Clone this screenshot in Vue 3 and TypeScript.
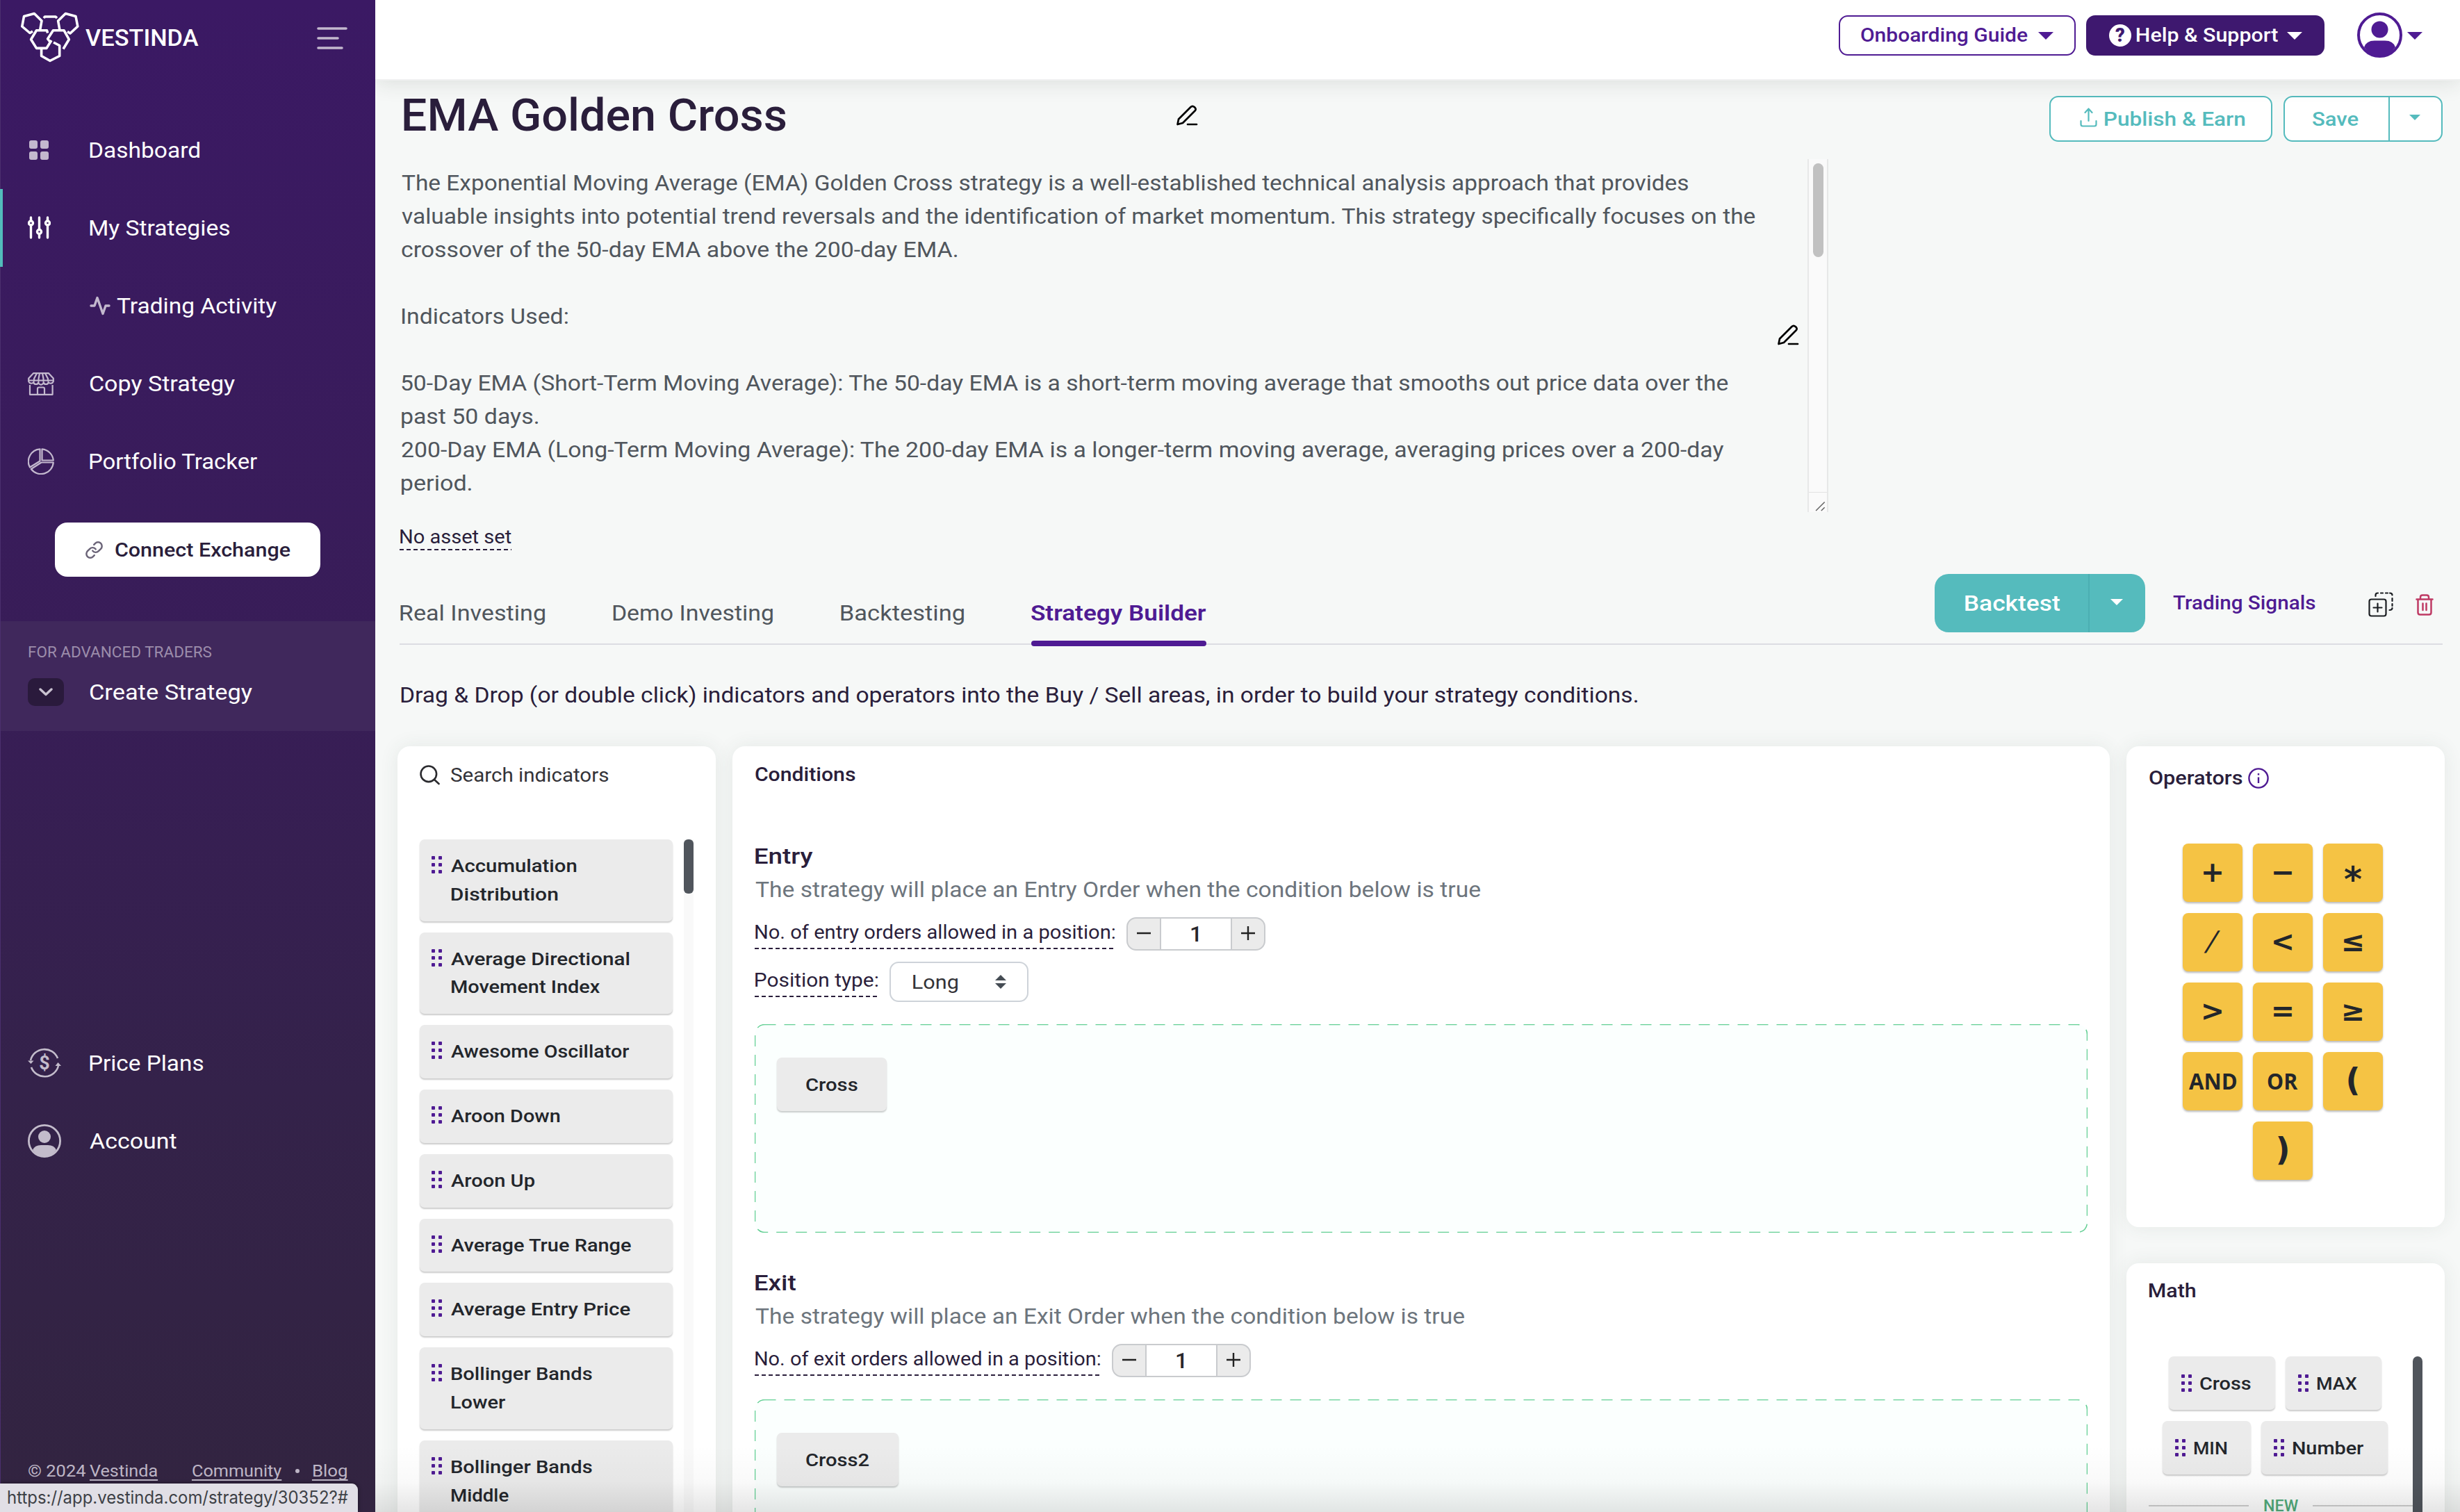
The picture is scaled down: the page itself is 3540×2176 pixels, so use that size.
<script setup lang="ts">
import type { Directive } from 'vue'

// Stretches a single line of text so that its ink spans exactly the given width.
const vFit: Directive<HTMLElement, number> = {
  mounted(el, binding) {
    const text = (el.textContent ?? '').trim()
    const css = getComputedStyle(el)
    const ctx = document.createElement('canvas').getContext('2d')
    if (!ctx || text.length < 2) return
    ctx.font = `${css.fontWeight} ${css.fontSize} ${css.fontFamily}`
    const m = ctx.measureText(text)
    const ink = m.actualBoundingBoxLeft + m.actualBoundingBoxRight
    const w = binding.value
    const scale = w / ink
    el.style.width = `${ink}px`
    el.style.marginRight = `${w - ink}px`
    el.style.textIndent = `${m.actualBoundingBoxLeft}px`
    el.style.transform = `scaleX(${scale})`
  },
}

interface Line { t: string; w: number }

const description: Line[] = [
  { t: 'The Exponential Moving Average (EMA) Golden Cross strategy is a well-established technical analysis approach that provides', w: 1851 },
  { t: 'valuable insights into potential trend reversals and the identification of market momentum. This strategy specifically focuses on the', w: 1948 },
  { t: 'crossover of the 50-day EMA above the 200-day EMA.', w: 799 },
  { t: '', w: 0 },
  { t: 'Indicators Used:', w: 239 },
  { t: '', w: 0 },
  { t: '50-Day EMA (Short-Term Moving Average): The 50-day EMA is a short-term moving average that smooths out price data over the', w: 1909 },
  { t: 'past 50 days.', w: 196 },
  { t: '200-Day EMA (Long-Term Moving Average): The 200-day EMA is a longer-term moving average, averaging prices over a 200-day', w: 1903 },
  { t: 'period.', w: 100 },
]

const indicators: Line[][] = [
  [{ t: 'Accumulation', w: 181 }, { t: 'Distribution', w: 154 }],
  [{ t: 'Average Directional', w: 256 }, { t: 'Movement Index', w: 214 }],
  [{ t: 'Awesome Oscillator', w: 257 }],
  [{ t: 'Aroon Down', w: 157 }],
  [{ t: 'Aroon Up', w: 120 }],
  [{ t: 'Average True Range', w: 260 }],
  [{ t: 'Average Entry Price', w: 258 }],
  [{ t: 'Bollinger Bands', w: 203 }, { t: 'Lower', w: 79 }],
  [{ t: 'Bollinger Bands', w: 203 }, { t: 'Middle', w: 83 }],
]

interface Operator { t: string; kind?: string; w?: number }

const operators: Operator[] = [
  { t: '+' }, { t: '−' }, { t: '*', kind: 'star' },
  { t: '/', kind: 'slash' }, { t: '<' }, { t: '≤' },
  { t: '>' }, { t: '=' }, { t: '≥' },
  { t: 'AND', kind: 'word', w: 68 }, { t: 'OR', kind: 'word', w: 44 }, { t: '(', kind: 'paren' },
  { t: ')', kind: 'paren' },
]

const mathRows: Line[][] = [
  [{ t: 'Cross', w: 73 }, { t: 'MAX', w: 58 }],
  [{ t: 'MIN', w: 47 }, { t: 'Number', w: 103 }],
]
</script>

<template>
  <div class="app">
    <aside class="side">
      <div class="brand">
        <svg class="logo" width="84" height="73" viewBox="30 17 84 73" fill="none" stroke="#fff" stroke-width="3.6" stroke-linejoin="round">
          <path d="M57.5 44L60 30 49.3 19.5 34.5 23.5 31.8 38 43 47.5 47 45" />
          <path d="M86 43.5L83.6 30 94.3 19.5 109 23.5 111.8 38 101 48 97 45.5" />
          <path d="M63 26L64.5 24H80L82 26" />
          <path d="M68.6 47.5L67.5 43.7H52.5L44.6 56.7 52.5 69.4H67L74 58" />
          <path d="M73 61.5L68.6 56 76.5 43.7H92L99.3 56.7 91 70.5" />
          <path d="M59.6 69V80.5L72 87.5 85.7 80.5V65.5L77 61" />
        </svg>
        <span v-fit="163" class="brand-name">VESTINDA</span>
        <svg class="burger" width="44" height="32" viewBox="0 0 44 32" fill="none" stroke="#c3b8ce" stroke-width="3.6" stroke-linecap="round">
          <path d="M2 2H42M2 16H30M2 30H36" />
        </svg>
      </div>

      <nav class="nav">
        <a class="item">
          <svg class="ico dashboard" width="28" height="28" viewBox="0 0 28 28" fill="#c3b8ce">
            <rect width="12" height="12" rx="3" /><rect x="16" width="12" height="12" rx="3" />
            <rect y="16" width="12" height="12" rx="3" /><rect x="16" y="16" width="12" height="12" rx="3" />
          </svg>
          <span v-fit="158">Dashboard</span>
        </a>
        <a class="item active">
          <svg class="ico" width="33" height="34" viewBox="0 0 33 34" fill="none" stroke="#fff" stroke-width="3.4" stroke-linecap="round">
            <path d="M4.500 2V6M4.500 14V31M16.500 2V18M16.500 26V31M28.500 2V6M28.500 14V31" />
            <circle cx="4.500" cy="10" r="3" /><circle cx="16.500" cy="22.500" r="3" /><circle cx="28.500" cy="10" r="3" />
          </svg>
          <span v-fit="201">My Strategies</span>
        </a>
        <a class="item sub">
          <svg class="pulse" width="30" height="28" viewBox="0 0 30 28" fill="none" stroke="#c3b8ce" stroke-width="3.4" stroke-linecap="round" stroke-linejoin="round">
            <path d="M2 14H7L11 2.500 19 25.500 23 14H28" />
          </svg>
          <span v-fit="230">Trading Activity</span>
        </a>
        <a class="item">
          <svg class="ico" width="38" height="33" viewBox="0 0 38 33" fill="none" stroke="#c3b8ce" stroke-width="2.2" stroke-linejoin="round">
            <path d="M8 1.200H30L36.800 8.500V11.500H1.200V8.500Z M3 18V31.800H35.600V18M14 31.800V23.500Q14 21.500 16 21.500H22Q24 21.500 24 23.500V31.800" />
            <path d="M13 1.200L9 9V13M17 1.200L15.500 9V13M21 1.200L22.500 9V13M25 1.200L29 9V13M1.200 11.500V13A4 4 0 0 0 8.300 14 3.600 3.600 0 0 0 15.400 14 3.600 3.600 0 0 0 22.600 14 3.600 3.600 0 0 0 29.700 14 4 4 0 0 0 36.800 13V11.500" />
          </svg>
          <span v-fit="209">Copy Strategy</span>
        </a>
        <a class="item">
          <svg class="ico" width="38" height="38" viewBox="0 0 38 38" fill="none" stroke="#c3b8ce" stroke-width="2.200" stroke-linejoin="round">
            <path d="M17.500 1.300V18.500L3 27.500A17.800 17.800 0 0 1 17.500 1.300ZM20.500 1.300A17.800 17.800 0 0 1 36.800 17.500H20.500ZM36.800 20.500A17.800 17.800 0 0 1 4.800 30L19.500 20.500Z" />
          </svg>
          <span v-fit="242">Portfolio Tracker</span>
        </a>
      </nav>

      <button class="connect">
        <svg width="27" height="27" viewBox="0 0 24 24" fill="none" stroke="#6b6478" stroke-width="2.200" stroke-linecap="round" stroke-linejoin="round">
          <path d="M10 13a5 5 0 0 0 7.540.54l3-3a5 5 0 0 0-7.070-7.070l-1.720 1.710" /><path d="M14 11a5 5 0 0 0-7.540-.54l-3 3a5 5 0 0 0 7.070 7.070l1.710-1.710" />
        </svg>
        <span v-fit="252">Connect Exchange</span>
      </button>

      <div class="advanced">
        <div class="adv-label"><span v-fit="264">FOR ADVANCED TRADERS</span></div>
        <div class="adv-row">
          <i class="toggle">
            <svg width="20" height="12" viewBox="0 0 20 12" fill="none" stroke="#c9c2d0" stroke-width="3.400" stroke-linecap="round" stroke-linejoin="round"><path d="M2 2L10 9.500 18 2" /></svg>
          </i>
          <span v-fit="234">Create Strategy</span>
        </div>
      </div>

      <div class="lower">
        <a class="item">
          <svg class="ico" width="48" height="44" viewBox="0 0 48 44" fill="none" stroke="#c3bccb" stroke-width="2.600">
            <path d="M4 18A20.500 20.500 0 0 1 43 15M44 26A20.500 20.500 0 0 1 5 28" />
            <path d="M0 18.500L8.500 18.500 4.500 23ZM48 26H39.500L43.500 21Z" fill="#c3bccb" stroke="none" />
            <text x="24" y="31" font-size="27" font-weight="700" text-anchor="middle" fill="#c3bccb" stroke="none">$</text>
          </svg>
          <span v-fit="163">Price Plans</span>
        </a>
        <a class="item">
          <svg class="ico" width="48" height="48" viewBox="0 0 48 48" fill="#c3bccb">
            <circle cx="24" cy="24" r="22.600" fill="none" stroke="#c3bccb" stroke-width="2.800" /><circle cx="24" cy="18" r="9" />
            <path d="M7 37Q10 30 19 30H29Q38 30 41 37Q34 47 24 47T7 37Z" />
          </svg>
          <span v-fit="125">Account</span>
        </a>
      </div>

      <div class="foot">
        <span v-fit="82">© 2024</span><i class="g1"></i><u v-fit="97">Vestinda</u><i class="g2"></i>
        <u v-fit="129">Community</u><i class="dot"></i><u v-fit="49">Blog</u>
      </div>
    </aside>

    <section class="main">
      <header class="top">
        <button class="tbtn outline"><span v-fit="240">Onboarding Guide</span><i class="caret"></i></button>
        <button class="tbtn solid"><i class="q">?</i><span v-fit="203">Help &amp; Support</span><i class="caret"></i></button>
        <svg class="avatar" width="65" height="65" viewBox="0 0 65 65" fill="#4f1b93">
          <circle cx="32.500" cy="32.500" r="30.500" fill="none" stroke="#4f1b93" stroke-width="4" /><circle cx="32.500" cy="24.500" r="12" />
          <path d="M10 50Q13 40.500 25 40.500H40Q52 40.500 55 50Q46 63 32.500 63T10 50Z" />
        </svg>
        <i class="caret purple"></i>
      </header>

      <div class="content">
        <div class="head">
          <div class="info">
            <div class="title-row">
              <h1 v-fit="550">EMA Golden Cross</h1>
              <i class="title-gap"></i>
              <svg width="32" height="32" viewBox="0 0 32 32" fill="none" stroke="#000" stroke-width="2.700" stroke-linejoin="round" stroke-linecap="round"><path d="M2.500 29L4 21.500 21.500 4Q24 1.500 27 4.300T27.500 9.500L10 27ZM17 29H30" /></svg>
            </div>
            <div class="desc">
              <div class="desc-text">
                <div v-for="(l, i) in description" :key="i" class="dline"><span v-if="l.t" v-fit="l.w">{{ l.t }}</span></div>
              </div>
              <svg class="pen2" width="32" height="32" viewBox="0 0 32 32" fill="none" stroke="#000" stroke-width="2.700" stroke-linejoin="round" stroke-linecap="round"><path d="M2.500 29L4 21.500 21.500 4Q24 1.500 27 4.300T27.500 9.500L10 27ZM17 29H30" /></svg>
              <div class="dscroll">
                <i class="dthumb"></i>
                <svg class="grab" width="26" height="29" viewBox="0 0 26 29" stroke="#666" stroke-width="1.600"><path d="M10 27L23 14M18 27L23 22" /></svg>
              </div>
            </div>
          </div>
          <div class="actions">
            <button class="abtn publish">
              <svg width="25" height="28" viewBox="0 0 25 28" fill="none" stroke="#55bbbd" stroke-width="2.200" stroke-linecap="round" stroke-linejoin="round"><path d="M12.500 19V2M7.500 7L12.500 1.500 17.500 7M1.500 19V24Q1.500 26.500 4 26.500H21Q23.500 26.500 23.500 24V19" /></svg>
              <span v-fit="201">Publish &amp; Earn</span>
            </button>
            <div class="abtn save"><b><span v-fit="66">Save</span></b><b class="drop"><i class="caret teal"></i></b></div>
          </div>
        </div>

        <div class="asset"><span v-fit="160">No asset set</span></div>

        <div class="tabs">
          <a><span v-fit="208">Real Investing</span></a>
          <a><span v-fit="230">Demo Investing</span></a>
          <a><span v-fit="177">Backtesting</span></a>
          <a class="on"><span v-fit="252">Strategy Builder</span></a>
          <div class="tools">
            <div class="backtest"><b><span v-fit="136">Backtest</span></b><b class="bdrop"><i class="caret white"></i></b></div>
            <div class="signals"><span v-fit="205">Trading Signals</span></div>
            <svg class="dup" width="36" height="36" viewBox="0 0 36 36" fill="none" stroke="#1b1e22" stroke-width="2.200" stroke-linecap="round">
              <rect x="1.500" y="10.500" width="24" height="24" rx="3" /><path d="M13.500 16.500V28.500M7.500 22.500H19.500" />
              <path d="M10.500 6V4.500Q10.500 1.500 13.500 1.500H14M18 1.500H21M25 1.500H28M31 1.500Q34.500 1.500 34.500 4.500M34.500 9V13M34.500 17V20M34.500 23Q34.500 26 30.500 26" />
            </svg>
            <svg class="trash" width="26" height="31" viewBox="0 0 26 31" fill="none" stroke="#bf3a64" stroke-width="2.500" stroke-linecap="round" stroke-linejoin="round">
              <path d="M1.500 7.500H24.500M7 7V4.500Q7 1.500 10 1.500H16Q19 1.500 19 4.500V7M3.500 8V26.500Q3.500 29.500 6.500 29.500H19.500Q22.500 29.500 22.500 26.500V8M10.500 13.500V23M15.500 13.500V23" />
            </svg>
          </div>
        </div>

        <div class="hint"><span v-fit="1779">Drag &amp; Drop (or double click) indicators and operators into the Buy / Sell areas, in order to build your strategy conditions.</span></div>

        <div class="cols">
          <div class="card left">
            <div class="search">
              <svg width="29" height="29" viewBox="0 0 29 29" fill="none" stroke="#2b2b2f" stroke-width="2.600" stroke-linecap="round"><circle cx="12.800" cy="12.800" r="11.300" /><path d="M21 21L27.500 27" /></svg>
              <span v-fit="227">Search indicators</span>
            </div>
            <div class="list-wrap">
              <div class="list">
                <div v-for="(it, i) in indicators" :key="i" class="chip ind">
                  <i class="grip"><em v-for="n in 6" :key="n"></em></i>
                  <div class="lines"><div v-for="l in it" :key="l.t"><span v-fit="l.w">{{ l.t }}</span></div></div>
                </div>
              </div>
              <div class="track"><i></i></div>
            </div>
          </div>

          <div class="card mid">
            <div class="h28"><span v-fit="144">Conditions</span></div>

            <div class="sec entry">
              <div class="h32"><span v-fit="83">Entry</span></div>
              <div class="muted"><span v-fit="1043">The strategy will place an Entry Order when the condition below is true</span></div>
              <div class="row">
                <div class="dashed"><span v-fit="517">No. of entry orders allowed in a position:</span></div>
                <div class="stepper">
                  <b><svg width="20" height="20" viewBox="0 0 20 20" stroke="#222" stroke-width="2.400"><path d="M0 10H20" /></svg></b><strong>1</strong>
                  <b><svg width="20" height="20" viewBox="0 0 20 20" stroke="#222" stroke-width="2.400"><path d="M0 10H20M10 0V20" /></svg></b>
                </div>
              </div>
              <div class="row pos">
                <div class="dashed"><span v-fit="176">Position type:</span></div>
                <div class="select"><span v-fit="64">Long</span>
                  <svg width="16" height="20" viewBox="0 0 16 20" fill="#454c54"><path d="M8 0L16 8H0ZM8 20L0 12H16Z" /></svg>
                </div>
              </div>
              <div class="zone">
                <svg class="dash" width="1918" height="300"><rect x="0.500" y="0.500" width="1917" height="299" rx="14" fill="#fbfffe" stroke="#62cf93" stroke-width="1.500" stroke-dasharray="16 12" /></svg>
                <div class="chip cond"><span v-fit="74">Cross</span></div>
              </div>
            </div>

            <div class="sec exit">
              <div class="h32"><span v-fit="58">Exit</span></div>
              <div class="muted"><span v-fit="1020">The strategy will place an Exit Order when the condition below is true</span></div>
              <div class="row">
                <div class="dashed"><span v-fit="496">No. of exit orders allowed in a position:</span></div>
                <div class="stepper">
                  <b><svg width="20" height="20" viewBox="0 0 20 20" stroke="#222" stroke-width="2.400"><path d="M0 10H20" /></svg></b><strong>1</strong>
                  <b><svg width="20" height="20" viewBox="0 0 20 20" stroke="#222" stroke-width="2.400"><path d="M0 10H20M10 0V20" /></svg></b>
                </div>
              </div>
              <div class="zone">
                <svg class="dash" width="1918" height="300"><rect x="0.500" y="0.500" width="1917" height="299" rx="14" fill="#fbfffe" stroke="#62cf93" stroke-width="1.500" stroke-dasharray="16 12" /></svg>
                <div class="chip cond"><span v-fit="91">Cross2</span></div>
              </div>
            </div>
          </div>

          <div class="right">
            <div class="card ops">
              <div class="h28 op-title"><span v-fit="134">Operators</span>
                <i class="info-gap"></i>
                <svg width="30" height="30" viewBox="0 0 30 30" fill="none" stroke="#4f1b93" stroke-width="2.400"><circle cx="15" cy="15" r="13.600" /><path d="M15 13.500V22M15 8V10.500" /></svg>
              </div>
              <div class="grid">
                <div v-for="o in operators" :key="o.t" class="op" :class="o.kind">
                  <span v-if="o.w" v-fit="o.w">{{ o.t }}</span><span v-else>{{ o.t }}</span>
                </div>
              </div>
            </div>
            <div class="card math">
              <div class="h28"><span v-fit="66">Math</span></div>
              <div class="math-body">
                <div class="math-list">
                  <div v-for="(r, i) in mathRows" :key="i" class="mrow">
                    <div v-for="c in r" :key="c.t" class="chip mchip">
                      <i class="grip"><em v-for="n in 6" :key="n"></em></i><span v-fit="c.w">{{ c.t }}</span>
                    </div>
                  </div>
                  <div class="new"><i></i><span v-fit="49">NEW</span><i></i></div>
                </div>
                <div class="mthumb"></div>
              </div>
            </div>
          </div>
        </div>
      </div>
      <div class="shade"></div>
    </section>
    <div class="status"><span v-fit="490">https://app.vestinda.com/strategy/30352?#</span></div>
  </div>
</template>

<style>
html, body { margin: 0; overflow: hidden; }
</style>

<style scoped>
* { box-sizing: border-box; }
.app { position: relative; display: flex; width: 3540px; height: 2176px; overflow: hidden; background: #f6f8f7; font-family: Roboto, "Liberation Sans", sans-serif; font-size: 32px; color: #2a1e3b; white-space: nowrap; }
span, u, h1 { display: inline-block; flex: none; transform-origin: 0 50%; }
i, em { font-style: normal; display: block; flex: none; }
b { font-weight: inherit; display: flex; align-items: center; }
svg { display: block; flex: none; }
button { font: inherit; color: inherit; padding: 0; margin: 0; border: 0; background: none; display: flex; align-items: center; }

/* sidebar */
.side { width: 540px; flex: none; height: 2176px; display: flex; flex-direction: column; background: linear-gradient(180deg, #3b1964 0%, #381d57 45%, #34224a 72%, #322440 100%); color: #fff; border-left: 1px solid #4b2f6e; }
.brand { height: 160px; display: flex; align-items: flex-start; padding: 17px 0 0 29px; }
.brand-name { margin: 17px 0 0 9px; font-size: 34px; line-height: 40px; font-weight: 500; }
.burger { margin: 22px 0 0 170px; }
.item { display: grid; grid-template-columns: 89px auto; justify-content: start; align-items: center; height: 112px; padding-left: 39px; position: relative; }
.dashboard { margin-left: 2px; }
.item.active::before { content: ''; position: absolute; left: -1px; top: 0; width: 4px; height: 112px; background: #52bcbb; }
.item.sub { grid-template-columns: 39px auto; padding-left: 128px; }
.connect { margin: 32px 0 0 78px; width: 382px; height: 78px; border-radius: 18px; background: #fff; color: #2a1e3b; font-size: 28px; font-weight: 500; padding-left: 43px; gap: 17px; flex: none; }
.advanced { margin-top: 64px; height: 158px; background: #40285c; flex: none; padding: 28px 0 0 40px; }
.adv-label { font-size: 22.500px; line-height: 32px; height: 32px; color: #9c8dab; display: flex; }
.adv-row { display: flex; align-items: center; height: 40px; margin: 22px 0 0 -1px; }
.toggle { width: 52px; height: 40px; border-radius: 10px; background: #2a1a3c; display: flex; align-items: center; justify-content: center; margin-right: 37px; }
.lower { margin-top: 422px; flex: none; }
.foot { display: flex; align-items: center; margin: 401px 0 0 40px; height: 36px; font-size: 24px; color: #bdb5c5; flex: none; }
.foot u { text-decoration-thickness: 1.500px; text-underline-offset: 4px; text-decoration-skip-ink: none; }
.g1 { width: 6px; }
.g2 { width: 51px; }
.dot { width: 6px; height: 6px; border-radius: 3px; background: #bdb5c5; margin: 0 19px; }
.status { position: absolute; left: 0; top: 2135px; width: 515px; height: 41px; border-radius: 0 9px 0 0; background: #e1dfe6; color: #3d4146; font-family: Inter, Roboto, sans-serif; font-size: 25px; line-height: 41px; padding-left: 11px; box-shadow: 1px -1px 5px rgba(0, 0, 0, .35); }

/* top bar */
.main { width: 3000px; height: 2176px; position: relative; overflow: hidden; }
.top { position: relative; z-index: 2; height: 114px; background: #fff; display: flex; align-items: flex-start; padding: 22px 54px 0 0; justify-content: flex-end; font-size: 28px; font-weight: 500; box-shadow: 0 2px 0 #eff0f0, 0 6px 28px rgba(40, 50, 45, .12); }
.caret { width: 0; height: 0; border: 11px solid transparent; border-top-color: currentColor; border-bottom: 0; }
.tbtn { height: 58px; border-radius: 13px; }
.tbtn span { position: relative; top: -1px; }
.outline { width: 341px; border: 2px solid #4f1b93; color: #4f1b93; padding-left: 30px; gap: 15px; margin-right: 15px; }
.solid { width: 343px; background: #3e186f; color: #fff; padding-left: 33px; }
.solid .caret { margin-left: 13px; }
.q { width: 32px; height: 32px; border-radius: 50%; background: #fff; color: #3e186f; font-size: 27px; font-weight: 900; line-height: 33px; text-align: center; margin-right: 8px; }
.avatar { margin: -4px 0 0 47px; }
.caret.purple { color: #4f1b93; margin: 24px 0 0 7px; }

/* strategy header */
.content { padding-left: 35px; }
.head { display: flex; height: 624px; }
.info { width: 2056px; flex: none; }
.title-row { display: flex; align-items: center; height: 104px; padding: 0 0 0 6px; }
h1 { margin: 2px 0 0; font-size: 64px; line-height: 80px; font-weight: 500; }
.title-gap { width: 561px; }
.desc { display: flex; height: 508px; margin-top: 11px; position: relative; }
.desc-text { width: 1980px; padding: 10px 0 0 3px; color: #50565d; }
.dline { height: 48px; line-height: 48px; }
.pen2 { margin: 237px 0 0 2px; }
.dscroll { width: 30px; margin-left: 12px; background: #fafafa; border: solid #e7e8e8; border-width: 0 2px; display: flex; flex-direction: column; align-items: center; padding-top: 6px; height: 508px; }
.dthumb { width: 15px; height: 135px; border-radius: 8px; background: #c1c1c1; margin-left: 1px; }
.grab { margin-top: auto; border-top: 1px solid #e2e2e2; }
.actions { display: flex; margin: 24px 0 0 318px; font-size: 28px; font-weight: 500; color: #55bbbd; }
.abtn { height: 66px; border: 2px solid #55bbbd; border-radius: 13px; background: #fff; display: flex; }
.publish { width: 321px; padding: 0 0 0 42px; align-items: center; gap: 11px; margin-right: 16px; color: #55bbbd; }
.publish svg { margin-top: -4px; }
.save { width: 229px; }
.save b { padding-left: 40px; width: 149px; }
.save .drop { border-left: 2px solid #55bbbd; width: 76px; padding-left: 28px; }
.caret.teal { border-width: 8px 8px 0; margin-top: -5px; }
.asset { font-size: 28px; line-height: 35px; margin-top: 17px; height: 37px; width: 161px; padding-left: 1px; }
.asset, .dashed { background: repeating-linear-gradient(90deg, #2a1e3b 0 6px, transparent 6px 10px) left bottom / 100% 2px no-repeat; }

/* tabs */
.tabs { display: flex; width: 2940px; height: 136px; border-bottom: 2px solid #dcdde2; color: #50565d; }
.tabs a { height: 138px; padding-top: 71px; line-height: 38px; margin-right: 98px; }
.tabs a:first-child { padding-left: 1px; }
.tabs a.on { color: #4f1b93; font-weight: 600; margin-right: 0; margin-left: -1px; position: relative; }
.tabs a.on::after { content: ''; position: absolute; left: 0; right: 0; bottom: 0; height: 8px; border-radius: 4px; background: #4f1b93; }
.tools { margin-left: auto; display: flex; height: 84px; margin-top: 34px; align-items: center; padding-right: 13px; }
.backtest { display: flex; width: 303px; height: 84px; border-radius: 20px; background: #55bbbd; color: #fff; font-weight: 500; }
.backtest b { width: 221px; padding-left: 44px; padding-bottom: 1px; }
.backtest .bdrop { width: 82px; border-left: 2px solid #4bafb2; padding: 0 0 4px 30px; }
.caret.white { border-width: 9px 9px 0; }
.signals { font-size: 28px; font-weight: 500; color: #4f1b93; margin: 0 76px 1px 40px; }
.dup { margin: 4px 32px 0 0; }
.trash { margin-top: 4px; }
.hint { margin-top: 52px; height: 40px; line-height: 40px; padding-left: 2px; }

/* builder */
.cols { display: flex; margin: 54px 0 0 -3px; gap: 24px; }
.card { background: #fff; border-radius: 18px; box-shadow: 0 0 28px rgba(60, 80, 70, .09); }
.left { width: 458px; height: 1200px; padding: 25px 0 0 32px; }
.search { display: flex; align-items: center; gap: 16px; height: 32px; font-size: 28px; color: #333338; }
.list-wrap { display: flex; margin-top: 77px; gap: 16px; }
.list { width: 364px; display: flex; flex-direction: column; gap: 16px; }
.chip { background: #ebebeb; border-radius: 7px; box-shadow: 0 2px 2px rgba(0, 0, 0, .2); color: #23262b; font-size: 26.500px; font-weight: 500; display: flex; }
.ind { padding: 18px 0 18px 17px; }
.lines { line-height: 40.800px; margin-left: 13px; }
.lines div { height: 40.800px; }
.grip { width: 15px; height: 25px; display: grid; grid-template-columns: 5px 5px; grid-template-rows: 5px 5px 5px; justify-content: space-between; align-content: space-between; margin-top: 6px; }
.grip em { width: 5px; height: 5px; background: #4f1b93; border-radius: 1px; }
.track { width: 14px; background: #f9f9f9; }
.track i { width: 14px; height: 78px; border-radius: 6px; background: #50555c; }

.mid { width: 1982px; height: 1200px; padding: 21px 32px 0; }
.h28 { font-size: 28px; font-weight: 500; line-height: 40px; height: 40px; }
.h32 { font-weight: 500; line-height: 48px; height: 48px; padding-left: 1px; }
.mid .h28 { padding-left: 1px; }
.muted { color: #6d757d; line-height: 48px; height: 48px; padding-left: 1px; }
.entry { margin-top: 73px; }
.exit { margin-top: 48px; }
.row { display: flex; align-items: center; height: 48px; margin-top: 16px; font-size: 28px; }
.dashed { line-height: 40px; height: 44px; margin-top: -1px; padding-left: 1px; padding-right: 1px; }
.stepper { display: flex; width: 200px; height: 48px; border: 2px solid #c9cbce; border-radius: 14px; overflow: hidden; margin-left: 16px; background: #ebebeb; }
.stepper b { width: 46px; justify-content: center; padding-bottom: 2px; }
.stepper strong { flex: 1; background: #fff; border: solid #c9cbce; border-width: 0 2px; font-weight: 500; font-size: 32px; line-height: 45px; text-align: center; color: #26262b; }
.pos { height: 58px; }
.select { width: 200px; height: 58px; border: 2px solid #ced3d9; border-radius: 13px; margin-left: 16px; padding: 0 30px 0 32px; display: flex; align-items: center; justify-content: space-between; color: #333338; }
.zone { position: relative; width: 1918px; height: 300px; margin-top: 32px; padding: 48px 0 0 32px; display: flex; align-items: flex-start; }
.dash { position: absolute; left: 0; top: 0; }
.cond { position: relative; height: 77px; padding: 0 42px; align-items: center; }

.right { width: 458px; display: flex; flex-direction: column; gap: 52px; }
.ops { height: 692px; padding: 26px 0 0 33px; }
.op-title { display: flex; align-items: center; }
.info-gap { width: 8px; }
.grid { display: flex; flex-wrap: wrap; justify-content: center; gap: 16px 15px; width: 290px; margin: 74px 0 0 47px; }
.op { width: 86px; height: 84px; border-radius: 8px; background: #f5c344; box-shadow: 0 2px 3px rgba(0, 0, 0, .28); display: flex; align-items: center; justify-content: center; font-family: "DejaVu Sans", sans-serif; font-weight: 700; font-size: 41px; line-height: 80px; color: #23262b; padding-bottom: 2px; }
.op.star { font-size: 50px; padding: 19px 0 0; }
.op.slash { font-family: Roboto, sans-serif; font-weight: 400; font-size: 42px; padding-bottom: 2px; }
.op.slash span { transform: skewX(-13deg); transform-origin: 50% 50%; }
.op.paren { font-size: 46px; padding-bottom: 4px; }
.op.word { font-family: "Open Sans", sans-serif; font-size: 32px; padding-bottom: 0; }
.math { height: 500px; padding: 20px 0 0 33px; }
.math-body { display: flex; margin: 74px 0 0 -1px; }
.math-list { width: 380px; display: flex; flex-direction: column; gap: 16px; flex: none; }
.mrow { display: flex; justify-content: center; gap: 15px; padding-right: 16px; }
.mchip { height: 77px; padding: 0 35px 0 18px; align-items: center; }
.mchip .grip { margin: 0 12px 0 0; }
.mthumb { width: 14px; height: 400px; border-radius: 7px; background: #50555c; }
.new { display: flex; align-items: center; justify-content: space-between; height: 18px; margin-top: 20px; color: #52ac7c; font-size: 24px; line-height: 18px; font-weight: 500; }
.new i { width: 144px; height: 2px; background: #cfcfcf; }
.shade { position: absolute; left: 0; right: 0; bottom: 0; height: 96px; background: linear-gradient(180deg, rgba(0, 0, 0, 0), rgba(0, 0, 0, .025) 55%, rgba(0, 0, 0, .1)); z-index: 3; }
</style>
